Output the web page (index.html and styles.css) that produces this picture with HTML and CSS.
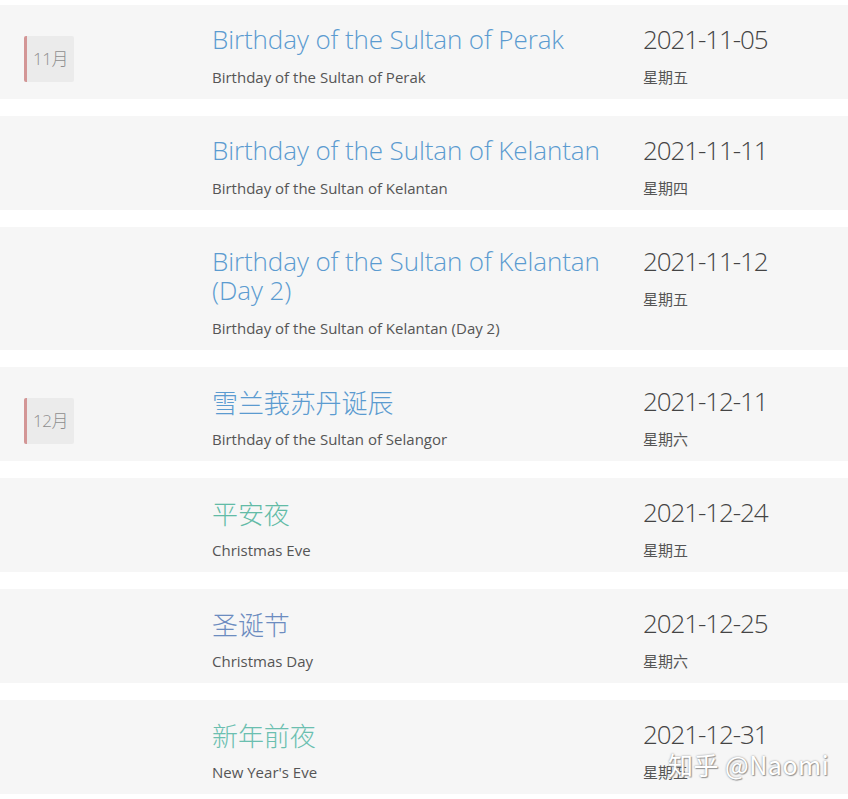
FILE: index.html
```html
<!DOCTYPE html>
<html lang="zh-CN">
<head>
<meta charset="utf-8">
<title>Holidays</title>
<link rel="stylesheet" href="styles.css">
</head>
<body>
<div class="list">
  <div class="row">
    <div class="month-col"><span class="month">11月</span></div>
    <div class="main">
      <div class="title blue">Birthday of the Sultan of Perak</div>
      <div class="sub">Birthday of the Sultan of Perak</div>
    </div>
    <div class="when">
      <div class="date">2021-11-05</div>
      <div class="sub">星期五</div>
    </div>
  </div>
  <div class="row">
    <div class="month-col"></div>
    <div class="main">
      <div class="title blue">Birthday of the Sultan of Kelantan</div>
      <div class="sub">Birthday of the Sultan of Kelantan</div>
    </div>
    <div class="when">
      <div class="date">2021-11-11</div>
      <div class="sub">星期四</div>
    </div>
  </div>
  <div class="row">
    <div class="month-col"></div>
    <div class="main">
      <div class="title blue">Birthday of the Sultan of Kelantan (Day 2)</div>
      <div class="sub">Birthday of the Sultan of Kelantan (Day 2)</div>
    </div>
    <div class="when">
      <div class="date">2021-11-12</div>
      <div class="sub">星期五</div>
    </div>
  </div>
  <div class="row">
    <div class="month-col"><span class="month">12月</span></div>
    <div class="main">
      <div class="title cjk blue">雪兰莪苏丹诞辰</div>
      <div class="sub">Birthday of the Sultan of Selangor</div>
    </div>
    <div class="when">
      <div class="date">2021-12-11</div>
      <div class="sub">星期六</div>
    </div>
  </div>
  <div class="row">
    <div class="month-col"></div>
    <div class="main">
      <div class="title cjk green">平安夜</div>
      <div class="sub">Christmas Eve</div>
    </div>
    <div class="when">
      <div class="date">2021-12-24</div>
      <div class="sub">星期五</div>
    </div>
  </div>
  <div class="row">
    <div class="month-col"></div>
    <div class="main">
      <div class="title cjk slate">圣诞节</div>
      <div class="sub">Christmas Day</div>
    </div>
    <div class="when">
      <div class="date">2021-12-25</div>
      <div class="sub">星期六</div>
    </div>
  </div>
  <div class="row">
    <div class="month-col"></div>
    <div class="main">
      <div class="title cjk teal">新年前夜</div>
      <div class="sub">New Year's Eve</div>
    </div>
    <div class="when">
      <div class="date">2021-12-31</div>
      <div class="sub">星期五</div>
    </div>
  </div>
</div>
<div class="watermark">知乎 @Naomi</div>
</body>
</html>
```

FILE: styles.css
```css
* { box-sizing: border-box; }
html, body { margin: 0; padding: 0; background: #fff; }
body {
  font-family: "Open Sans", "Noto Sans CJK SC", sans-serif;
  color: #555;
  position: relative;
  width: 848px;
  height: 799px;
  overflow: hidden;
}
.list {
  padding-top: 4.5px;
  display: flex;
  flex-direction: column;
  gap: 17px;
}
.row {
  display: flex;
  background: #f6f6f6;
  padding: 20px 0 12px;
}
.month-col {
  width: 212px;
  flex: none;
  padding-left: 24px;
}
.month {
  display: inline-block;
  margin-top: 11px;
  height: 46px;
  line-height: 46px;
  padding: 0 6px 0 6px;
  background: #ebebeb;
  border-left: 3px solid #d39696;
  border-radius: 2px;
  font-size: 17px;
  font-weight: 300;
  color: #8e8e8e;
  letter-spacing: -0.5px;
}
.main {
  width: 431px;
  flex: none;
  padding-right: 30px;
}
.title {
  font-size: 26px;
  font-weight: 300;
  line-height: 29.5px;
  margin-bottom: 12.5px;
  letter-spacing: -0.1px;
}
.title.cjk {
  padding-top: 2px;
  margin-bottom: 10.5px;
}
.blue { color: #5b9bd0; }
.green { color: #62bba6; }
.slate { color: #6c8cc0; }
.teal { color: #6bbfb0; }
.sub {
  font-size: 15px;
  line-height: 20px;
  color: #555;
}
.when { flex: 1; }
.date {
  font-size: 26px;
  font-weight: 300;
  line-height: 29.5px;
  margin-bottom: 12.5px;
  color: #444;
  letter-spacing: -1.1px;
}
.watermark {
  position: absolute;
  left: 668px;
  top: 748px;
  font-size: 25px;
  line-height: 32px;
  letter-spacing: 0.5px;
  color: #fff;
  text-shadow: 0 0 2px #888, 1px 1px 1px #999;
  font-family: "Noto Sans CJK SC", "Open Sans", sans-serif;
}
```
